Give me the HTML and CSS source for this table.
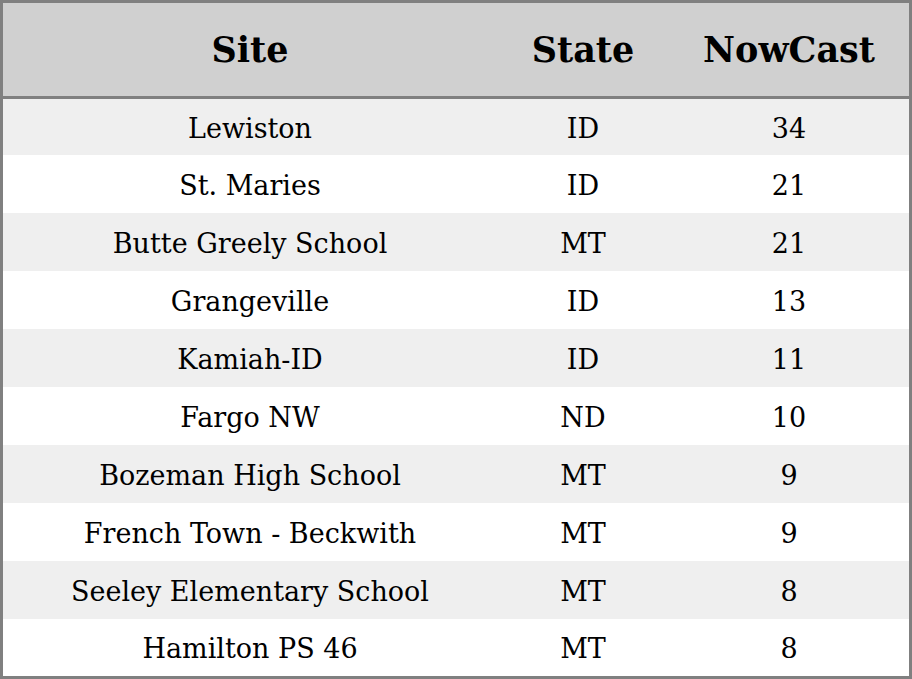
FILE: index.html
```html
<!DOCTYPE html>
<html>
<head>
<meta charset="utf-8">
<link rel="stylesheet" href="styles.css">
</head>
<body>
<div class="table">
  <div class="row head">
    <div class="c site">Site</div>
    <div class="c state">State</div>
    <div class="c now">NowCast</div>
  </div>
  <div class="row odd first"><div class="c site">Lewiston</div><div class="c state">ID</div><div class="c now">34</div></div>
  <div class="row"><div class="c site">St. Maries</div><div class="c state">ID</div><div class="c now">21</div></div>
  <div class="row odd"><div class="c site">Butte Greely School</div><div class="c state">MT</div><div class="c now">21</div></div>
  <div class="row"><div class="c site">Grangeville</div><div class="c state">ID</div><div class="c now">13</div></div>
  <div class="row odd"><div class="c site">Kamiah-ID</div><div class="c state">ID</div><div class="c now">11</div></div>
  <div class="row"><div class="c site">Fargo NW</div><div class="c state">ND</div><div class="c now">10</div></div>
  <div class="row odd"><div class="c site">Bozeman High School</div><div class="c state">MT</div><div class="c now">9</div></div>
  <div class="row"><div class="c site">French Town - Beckwith</div><div class="c state">MT</div><div class="c now">9</div></div>
  <div class="row odd"><div class="c site">Seeley Elementary School</div><div class="c state">MT</div><div class="c now">8</div></div>
  <div class="row last"><div class="c site">Hamilton PS 46</div><div class="c state">MT</div><div class="c now">8</div></div>
</div>
</body>
</html>
```
FILE: styles.css
```css
html, body {
  margin: 0;
  padding: 0;
  background: #ffffff;
}
.table {
  width: 912px;
  height: 679px;
  box-sizing: border-box;
  border: 3px solid #808080;
  font-family: "DejaVu Serif", serif;
  color: #000;
  display: flex;
  flex-direction: column;
  overflow: hidden;
}
.row {
  display: grid;
  grid-template-columns: 494px 172px 240px;
  box-sizing: border-box;
  height: 58px;
  padding-top: 2px;
  align-items: center;
  font-size: 27px;
  line-height: 1;
  flex: none;
}
.row.first { height: 56px; }
.row.last { height: 57px; }
.row.odd { background: #efefef; }
.row.head {
  height: 96px;
  padding-top: 0;
  background: #d0d0d0;
  border-bottom: 3px solid #808080;
  font-weight: bold;
  font-size: 35px;
}
.c {
  text-align: center;
  white-space: nowrap;
}
```
